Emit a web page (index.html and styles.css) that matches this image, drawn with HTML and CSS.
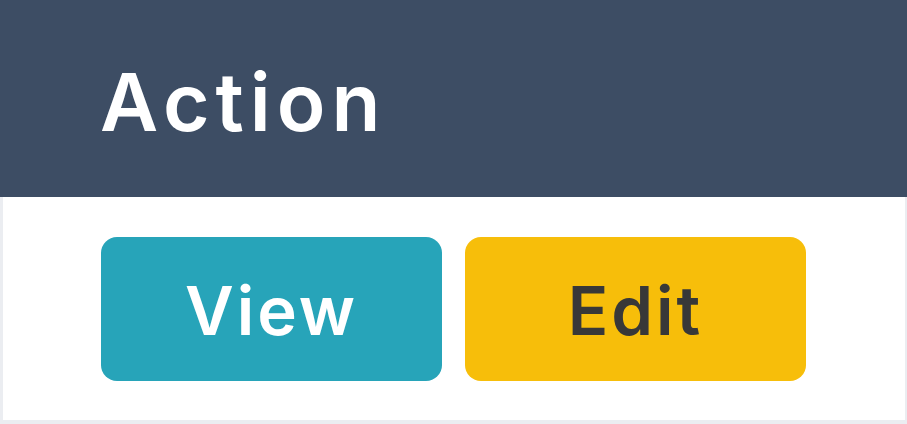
FILE: index.html
```html
<!DOCTYPE html>
<html lang="en">
<head>
    <meta charset="UTF-8">
    <meta name="viewport" content="width=device-width, initial-scale=1.0">
    <title>Action</title>
    <link rel="stylesheet" href="styles.css">
</head>
<body>
    <div class="actions">
        <div class="actions-head">Action</div>
        <div class="actions-body">
            <button class="btn btn-view">View</button>
            <button class="btn btn-edit">Edit</button>
        </div>
    </div>
</body>
</html>
```

FILE: styles.css
```css
body {
    margin: 0;
    font-family: Inter, "DejaVu Sans", sans-serif;
    background-color: #fff;
}
.actions-head {
    height: 197px;
    padding: 5px 0 0 100px;
    box-sizing: border-box;
    display: flex;
    align-items: center;
    background-color: #3d4d64;
    color: #fff;
    font-size: 80px;
    font-weight: 600;
    letter-spacing: 6px;
}
.actions-body {
    display: flex;
    gap: 23px;
    height: 227px;
    box-sizing: border-box;
    padding: 40px 0 0 98px;
    border-left: 3px solid #ebedf1;
    border-right: 2px solid #ebedf1;
    border-bottom: 4px solid #ebedf1;
}
.btn {
    width: 341px;
    height: 144px;
    border: none;
    border-radius: 16px;
    font-family: inherit;
    font-size: 67px;
    font-weight: 600;
    letter-spacing: 3px;
    padding: 2px 0 0;
    cursor: pointer;
}
.btn-view {
    background-color: #27a4b9;
    color: #fff;
}
.btn-edit {
    background-color: #f7be0a;
    color: #383838;
}
```
